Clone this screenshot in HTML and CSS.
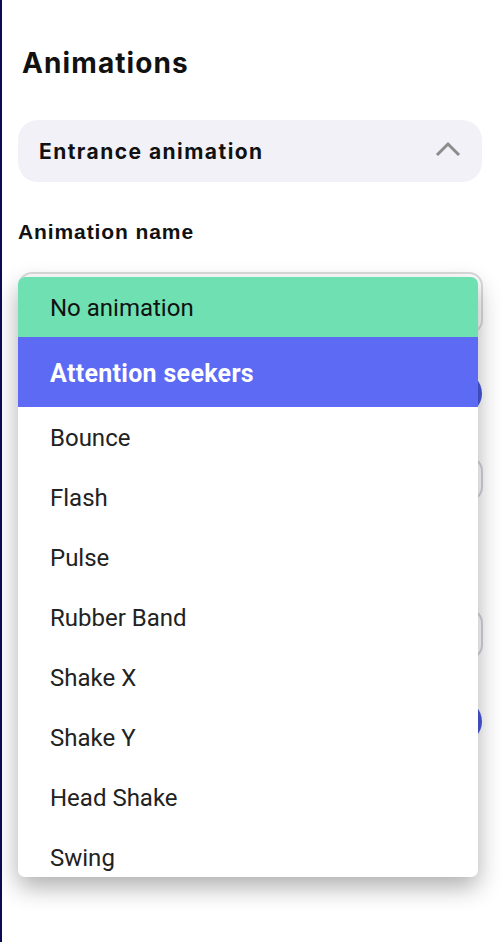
FILE: index.html
```html
<!DOCTYPE html>
<html>
<head>
<meta charset="utf-8">
<link rel="stylesheet" href="styles.css">
</head>
<body>
<div class="page">
  <div class="edge-mark"></div>
  <h1 class="title">Animations</h1>
  <div class="accordion">
    <span class="accordion-label">Entrance animation</span>
    <svg class="chevron" width="26" height="16" viewBox="0 0 26 16"><path d="M2 14 L13 3 L24 14" fill="none" stroke="#8c8c8c" stroke-width="3"/></svg>
  </div>
  <div class="field">
    <div class="label">Animation name</div>
    <div class="select-wrap">
      <div class="select"></div>
      <div class="dropdown">
        <div class="opt opt-none">No animation</div>
        <div class="opt opt-group">Attention seekers</div>
        <div class="opt">Bounce</div>
        <div class="opt">Flash</div>
        <div class="opt">Pulse</div>
        <div class="opt">Rubber Band</div>
        <div class="opt">Shake X</div>
        <div class="opt">Shake Y</div>
        <div class="opt">Head Shake</div>
        <div class="opt">Swing</div>
      </div>
    </div>
    <div class="btn btn-1"></div>
    <div class="input input-1"></div>
    <div class="input input-2"></div>
    <div class="btn btn-2"></div>
  </div>
</div>
</body>
</html>
```
FILE: styles.css
```css
html, body {
  margin: 0;
  padding: 0;
  background: #ffffff;
}
.page {
  position: relative;
  box-sizing: border-box;
  width: 502px;
  height: 942px;
  border-left: 2px solid #0b0b4f;
  padding: 0 20px 0 16px;
  overflow: hidden;
}
.edge-mark {
  position: absolute;
  left: -2px;
  top: 237px;
  width: 2px;
  height: 120px;
  background: #3a3a8e;
}
.title {
  margin: 0;
  padding: 46px 0 0 4px;
  font-family: Inter, "Noto Sans", sans-serif;
  font-weight: 700;
  font-size: 28px;
  line-height: 34px;
  color: #111;
  letter-spacing: 1.1px;
}
.accordion {
  margin-top: 40px;
  height: 62px;
  border-radius: 20px;
  background: #f1f1f7;
  display: flex;
  align-items: center;
  justify-content: space-between;
  padding: 0 21px 0 21px;
}
.accordion-label {
  font-family: Inter, "Noto Sans", sans-serif;
  font-weight: 700;
  font-size: 21px;
  color: #111;
  letter-spacing: 1.45px;
}
.chevron {
  display: block;
  margin-top: -4px;
}
.field {
  margin-top: 38px;
}
.label {
  font-family: "Liberation Sans", Arial, sans-serif;
  font-weight: 700;
  font-size: 21px;
  line-height: 24px;
  color: #111;
  letter-spacing: 0.9px;
}
.select-wrap {
  position: relative;
  margin-top: 28px;
}
.select {
  height: 58px;
  border: 2px solid #dcdcdc;
  border-radius: 14px;
  margin-right: -1px;
}
.dropdown {
  position: absolute;
  left: 0;
  top: 5px;
  width: 460px;
  height: 600px;
  overflow: hidden;
  background: #fff;
  border-radius: 7px;
  box-shadow: 0 10px 24px rgba(0, 0, 0, 0.32);
  z-index: 5;
}
.opt {
  height: 60px;
  display: flex;
  align-items: center;
  padding: 2px 0 0 32px;
  box-sizing: border-box;
  font-family: Roboto, "Noto Sans", sans-serif;
  font-size: 24px;
  color: #222;
}
.opt-none {
  background: #6ee0b2;
  color: #111;
}
.opt-group {
  height: 70px;
  background: #5c6af4;
  color: #fff;
  font-weight: 700;
  font-size: 25px;
  letter-spacing: 0.3px;
}
.btn {
  height: 43px;
  border-radius: 22px;
  background: #4a58da;
}
.btn-1 {
  margin-top: 38px;
}
.input {
  border: 2px solid #d4d4e0;
  border-radius: 14px;
  margin-right: -1px;
}
.input-1 {
  margin-top: 42px;
  height: 40px;
}
.input-2 {
  margin-top: 108px;
  height: 46px;
}
.btn-2 {
  margin-top: 41px;
}
```
